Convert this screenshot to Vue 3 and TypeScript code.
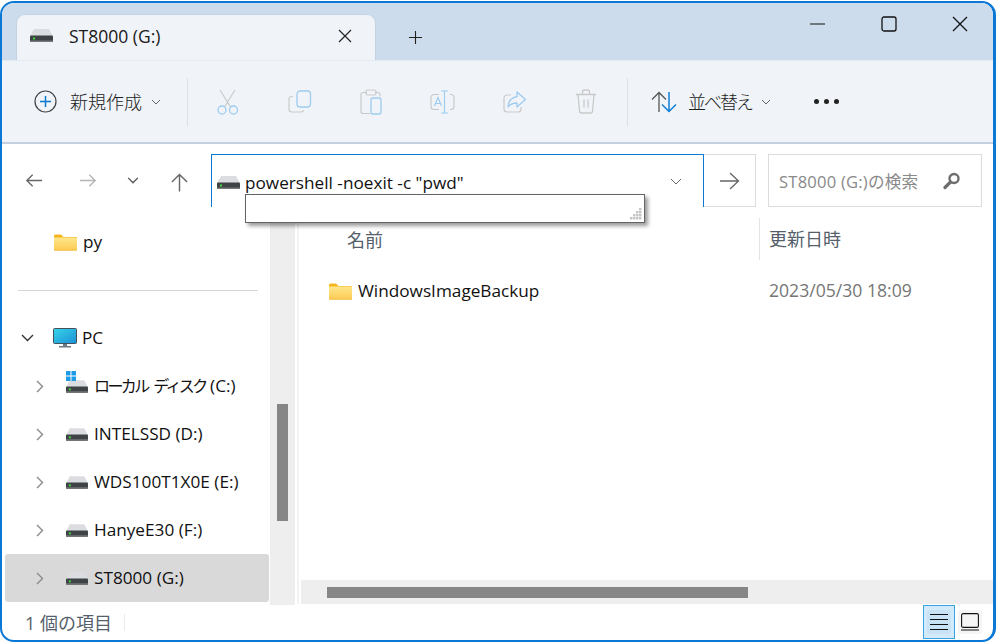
<script setup lang="ts">
interface Drive { label: string; jp?: string; selected?: boolean; win?: boolean }
const drives: Drive[] = [
  { jp: 'ローカル ディスク', label: ' (C:)', win: true },
  { label: 'INTELSSD (D:)' },
  { label: 'WDS100T1X0E (E:)' },
  { label: 'HanyeE30 (F:)' },
  { label: 'ST8000 (G:)', selected: true },
]
const dots: [number, number][] = [[9, 0], [6, 3], [9, 3], [3, 6], [6, 6], [9, 6], [0, 9], [3, 9], [6, 9], [9, 9]]
</script>

<template>
  <div class="window">
    <svg width="0" height="0" class="defs">
      <defs>
        <symbol id="drive" viewBox="0 0 23 13">
          <path d="M4 0h15l4 7H0z" fill="#dcdde0" />
          <rect x="0" y="6.500" width="23" height="6.500" rx="1" fill="#3f4345" />
          <rect x="0" y="11.500" width="23" height="1.500" fill="#77797b" />
          <rect x="3" y="8.500" width="2" height="2" fill="#3fe03a" />
        </symbol>
        <symbol id="folder" viewBox="0 0 23 17">
          <path d="M0 2a1.500 1.500 0 0 1 1.500-1.500h5.500l2.500 2.500H23v2H0z" fill="#f5b51f" />
          <path d="M0 3.500h22a1 1 0 0 1 1 1V15.500a1 1 0 0 1-1 1H1a1 1 0 0 1-1-1z" fill="url(#fg)" />
          <path d="M0 15.700h23v.8H0z" fill="#eeb43a" />
        </symbol>
        <linearGradient id="fg" x1="0" y1="0" x2="0" y2="1">
          <stop offset="0" stop-color="#ffe68c" />
          <stop offset="1" stop-color="#fdcb52" />
        </linearGradient>
      </defs>
    </svg>

    <header class="titlebar">
      <div class="tab">
        <svg class="drive" width="23" height="13"><use href="#drive" /></svg>
        <span class="tab-title">ST8000 (G:)</span>
        <svg class="tab-close" width="14" height="14" viewBox="0 0 14 14"><path d="M1 1l12 12M13 1L1 13" stroke="#222" stroke-width="1.200" fill="none" /></svg>
      </div>
      <svg class="tab-add" width="15" height="15" viewBox="0 0 16 16"><path d="M8 1v14M1 8h14" stroke="#222" stroke-width="1.200" fill="none" /></svg>
      <div class="controls">
        <svg width="16" height="16" viewBox="0 0 16 16"><path d="M0 8h15" stroke="#111" stroke-width="1.200" fill="none" /></svg>
        <svg width="16" height="16" viewBox="0 0 16 16"><rect x="1" y="1" width="14" height="14" rx="2" stroke="#111" stroke-width="1.300" fill="none" /></svg>
        <svg width="16" height="16" viewBox="0 0 16 16"><path d="M1 1l14 14M15 1L1 15" stroke="#111" stroke-width="1.300" fill="none" /></svg>
      </div>
    </header>

    <section class="toolbar">
      <svg class="t-new" width="23" height="23" viewBox="0 0 23 23">
        <circle cx="11.500" cy="11.500" r="10.500" fill="none" stroke="#444" stroke-width="1.200" />
        <path d="M11.500 6v11M6 11.500h11" stroke="#0a78d0" stroke-width="1.500" fill="none" />
      </svg>
      <span class="t-label">新規作成</span>
      <svg class="t-chev" width="10" height="6" viewBox="0 0 10 6"><path d="M1 1l4 4 4-4" stroke="#666" fill="none" /></svg>
      <i class="t-sep sep-a"></i>

      <svg class="t-icon first" width="24" height="26" viewBox="0 0 24 26">
        <path d="M4 1l10.500 17M19 1L8.500 18" stroke="#c9c9c9" stroke-width="1.200" fill="none" />
        <circle cx="6" cy="21" r="4" fill="none" stroke="#9fcbef" stroke-width="1.300" />
        <circle cx="17.500" cy="21" r="4" fill="none" stroke="#9fcbef" stroke-width="1.300" />
      </svg>
      <svg class="t-icon" width="24" height="24" viewBox="0 0 24 24">
        <path d="M5 6.500h-1.500a2.500 2.500 0 0 0-2.500 2.500v10a3 3 0 0 0 3 3h9a3 3 0 0 0 2.700-1.800" fill="none" stroke="#c9c9c9" stroke-width="1.200" />
        <rect x="9" y="1" width="13.500" height="16" rx="3" fill="none" stroke="#9fcbef" stroke-width="1.300" />
      </svg>
      <svg class="t-icon" width="22" height="26" viewBox="0 0 22 26">
        <path d="M7 3.500H3a2 2 0 0 0-2 2v17a2 2 0 0 0 2 2h7M15 3.500h3a2 2 0 0 1 2 2v2" fill="none" stroke="#c9c9c9" stroke-width="1.200" />
        <rect x="6" y="1" width="10" height="5" rx="1.500" fill="none" stroke="#c9c9c9" stroke-width="1.200" />
        <rect x="11" y="9" width="10" height="16" rx="2" fill="none" stroke="#9fcbef" stroke-width="1.300" />
      </svg>
      <svg class="t-icon" width="25" height="24" viewBox="0 0 25 24">
        <path d="M9 4.500H4a3 3 0 0 0-3 3v9a3 3 0 0 0 3 3h5M20 4.500h1a3 3 0 0 1 3 3v9a3 3 0 0 1-3 3h-1" fill="none" stroke="#c9c9c9" stroke-width="1.200" />
        <path d="M11 1h7M11 23h7M14.500 1v22" fill="none" stroke="#9fcbef" stroke-width="1.200" />
        <path d="M4.500 16l3.500-8.500 3.500 8.500M5.700 13.500h5" fill="none" stroke="#9fcbef" stroke-width="1.200" />
      </svg>
      <svg class="t-icon" width="24" height="22" viewBox="0 0 24 22">
        <path d="M8 4H4a3 3 0 0 0-3 3v11a3 3 0 0 0 3 3h11a3 3 0 0 0 3-3v-2" fill="none" stroke="#c9c9c9" stroke-width="1.200" />
        <path d="M14 1l8.500 7.500L14 16v-4c-4 0-7 1-9 4 0-5 3-9.500 9-10.500z" fill="none" stroke="#9fcbef" stroke-width="1.300" stroke-linejoin="round" />
      </svg>
      <svg class="t-icon" width="22" height="25" viewBox="0 0 22 25">
        <path d="M1 5.500h20M7.500 5.500V3a2 2 0 0 1 2-2h3a2 2 0 0 1 2 2v2.500" fill="none" stroke="#c9c9c9" stroke-width="1.300" />
        <path d="M3 5.500l1.500 16.500a2 2 0 0 0 2 2h9a2 2 0 0 0 2-2L19 5.500M9 10.500v8M13 10.500v8" fill="none" stroke="#c9c9c9" stroke-width="1.300" />
      </svg>
      <i class="t-sep sep-b"></i>

      <svg class="t-sort" width="26" height="22" viewBox="0 0 26 22">
        <path d="M8 21V1.500M1 8.500l7-7 7 7" fill="none" stroke="#555" stroke-width="1.300" />
        <path d="M18 1v19.500M11 13.500l7 7 7-7" fill="none" stroke="#0f7fd6" stroke-width="1.500" />
      </svg>
      <span class="t-label sort-label">並べ替え</span>
      <svg class="t-chev" width="10" height="6" viewBox="0 0 10 6"><path d="M1 1l4 4 4-4" stroke="#666" fill="none" /></svg>
      <div class="t-more"><b></b><b></b><b></b></div>
    </section>

    <section class="navbar">
      <svg class="n-ico back" width="18" height="15" viewBox="0 0 20 16"><path d="M19 8H2M8.500 1.500L2 8l6.500 6.500" fill="none" stroke="#666" stroke-width="1.500" /></svg>
      <svg class="n-ico fwd" width="18" height="15" viewBox="0 0 20 16"><path d="M1 8h17M11.500 1.500L18 8l-6.500 6.500" fill="none" stroke="#b5b5b5" stroke-width="1.500" /></svg>
      <svg class="n-ico down" width="12" height="7" viewBox="0 0 13 8"><path d="M1 1l5.500 5.500L12 1" fill="none" stroke="#555" stroke-width="1.600" /></svg>
      <svg class="n-ico up" width="19" height="20" viewBox="0 0 20 20"><path d="M10 20V2M2 10l8-8 8 8" fill="none" stroke="#666" stroke-width="1.500" /></svg>

      <div class="address">
        <svg class="addr-drive" width="23" height="13"><use href="#drive" /></svg>
        <span class="addr-text">powershell -noexit -c "pwd"</span>
        <svg class="addr-chev" width="12" height="7" viewBox="0 0 12 7"><path d="M1 1l5 5 5-5" fill="none" stroke="#666" /></svg>
        <div class="popup">
          <svg class="grip" width="12" height="12" viewBox="0 0 12 12">
            <rect v-for="d in dots" :key="d.join()" :x="d[0]" :y="d[1]" width="2.400" height="2.400" fill="#c4c4c4" />
          </svg>
        </div>
      </div>
      <div class="go">
        <svg width="20" height="18" viewBox="0 0 20 18"><path d="M0 9h18.500M10 1l8.500 8-8.500 8" fill="none" stroke="#666" stroke-width="1.300" /></svg>
      </div>
      <div class="search">
        <span>ST8000 (G:)の検索</span>
        <svg width="18" height="18" viewBox="0 0 18 18">
          <circle cx="11" cy="6.500" r="4.500" fill="none" stroke="#6e6e6e" stroke-width="2.400" />
          <path d="M7.500 10L2 15.500" stroke="#6e6e6e" stroke-width="3.200" stroke-linecap="round" />
        </svg>
      </div>
    </section>

    <section class="body">
      <aside class="sidebar">
        <div class="row folder-row">
          <svg width="23" height="17"><use href="#folder" /></svg>
          <span class="lift">py</span>
        </div>
        <hr class="divider" />
        <div class="row pc-row">
          <svg class="tw" width="13" height="8" viewBox="0 0 13 8"><path d="M1 1l5.500 5.500L12 1" fill="none" stroke="#333" stroke-width="1.400" /></svg>
          <svg width="24" height="20" viewBox="0 0 24 20">
            <defs><linearGradient id="sc" x1="0" y1="0" x2="1" y2="1"><stop offset="0" stop-color="#37d5e8" /><stop offset="1" stop-color="#1c8fd6" /></linearGradient></defs>
            <rect x="0.500" y="0.500" width="23" height="15" rx="1" fill="url(#sc)" stroke="#44505a" />
            <rect x="10" y="16" width="4" height="2" fill="#6c7a84" />
            <rect x="6" y="18" width="12" height="1.500" fill="#6c7a84" />
          </svg>
          <span class="lift">PC</span>
        </div>
        <div v-for="d in drives" :key="d.label" class="row drive-row" :class="{ selected: d.selected }">
          <svg class="tw" width="8" height="13" viewBox="0 0 8 13"><path d="M1 1l5.500 5.500L1 12" fill="none" stroke="#8a8a8a" stroke-width="1.400" /></svg>
          <span class="drive-ico">
            <svg width="22" height="13"><use href="#drive" /></svg>
            <svg v-if="d.win" class="win" width="10" height="10" viewBox="0 0 10 10">
              <path d="M0 0h4.500v4.500H0zM5.500 0H10v4.500H5.500zM0 5.500h4.500V10H0zM5.500 5.500H10V10H5.500z" fill="#1e9be6" />
            </svg>
          </span>
          <span class="d-label lift"><span v-if="d.jp" class="kana">{{ d.jp }}</span>{{ d.label }}</span>
        </div>
      </aside>

      <div class="vscroll"><i></i></div>

      <main class="main">
        <div class="pane">
          <div class="head">
            <svg class="sort-caret" width="9" height="5" viewBox="0 0 9 5"><path d="M1 4.500L4.500 1 8 4.500" fill="none" stroke="#777" /></svg>
            <span class="h-name">名前</span>
            <span class="h-date">更新日時</span>
          </div>
          <div class="item">
            <svg width="23" height="17"><use href="#folder" /></svg>
            <span class="i-name lift">WindowsImageBackup</span>
            <span class="i-date lift">2023/05/30 18:09</span>
          </div>
        </div>
        <div class="hscroll"><i></i></div>
      </main>
    </section>

    <footer class="status">
      <span class="count">1 個の項目</span>
      <i class="st-sep"></i>
      <div class="view on">
        <span>
          <svg width="20" height="18" viewBox="0 0 20 18"><path d="M1 1.500h18M1 6.500h18M1 11.500h18M1 16.500h18" stroke="#111" stroke-width="1.100" fill="none" /></svg>
        </span>
      </div>
      <div class="view alt">
        <svg width="18" height="18" viewBox="0 0 18 18"><rect x="0.600" y="0.600" width="16.800" height="13.800" rx="1.500" fill="none" stroke="#111" stroke-width="1.100" /><path d="M0 17h18" stroke="#111" stroke-width="1.100" /></svg>
      </div>
    </footer>
  </div>
</template>

<style>
html, body { margin: 0; background: #fff; overflow: hidden; }
</style>

<style scoped>
.window {
  box-sizing: border-box;
  width: 996px;
  height: 641px;
  margin-top: 1px;
  border: 2px solid #0a78d4;
  border-right-width: 3px;
  border-radius: 14px;
  overflow: hidden;
  display: flex;
  flex-direction: column;
  background: #fff;
  font-family: "Open Sans", "Noto Sans CJK JP", sans-serif;
  color: #1a1a1a;
  font-size: 17.200px;
}
.defs { position: absolute; }
.lift { padding-bottom: 2px; }

.titlebar {
  height: 57px;
  flex: none;
  background: #cddcec;
  display: flex;
  align-items: flex-end;
  padding-left: 14px;
}
.tab {
  box-sizing: border-box;
  width: 360px;
  height: 46px;
  background: #f0f4f9;
  border: 1px solid #c3d3e4;
  border-bottom: 0;
  border-radius: 9px 9px 0 0;
  display: flex;
  align-items: center;
  padding: 0 23px 4px 13px;
}
.tab-title { margin-left: 16px; flex: 1; font-size: 17.500px; }
.tab-add { margin: 0 0 15px 32px; }
.controls {
  margin-left: auto;
  align-self: flex-start;
  display: flex;
  gap: 55px;
  padding: 13px 25px 0 0;
}

.toolbar {
  box-sizing: border-box;
  height: 84px;
  flex: none;
  background: #f0f4f9;
  border-top: 1px solid #e3eaf2;
  border-bottom: 2px solid #c5d0de;
  display: flex;
  align-items: center;
  padding-left: 32px;
}
.t-label { font-size: 18px; font-weight: 300; margin-left: 13px; color: #222; position: relative; top: -1px; }
.t-chev { margin-left: 9px; }
.t-sep { width: 1px; height: 48px; background: #dde2e8; display: block; }
.sep-a { margin-left: 26px; }
.t-icon { margin-left: 48px; flex: none; }
.t-icon.first { margin-left: 28px; }
.sep-b { margin-left: 30px; }
.t-sort { margin-left: 23px; }
.sort-label { margin-left: 11px; letter-spacing: -2px; }
.t-more { display: flex; gap: 5px; margin-left: 43px; }
.t-more b { width: 5px; height: 5px; border-radius: 50%; background: #222; }

.navbar {
  box-sizing: border-box;
  height: 64px;
  flex: none;
  display: flex;
  align-items: flex-start;
  padding: 10px 11px 0 0;
}
.n-ico { flex: none; }
.back { margin: 19px 0 0 23px; }
.fwd { margin: 19px 0 0 36px; }
.down { margin: 23px 0 0 30px; }
.up { margin: 18px 0 0 31px; }
.address {
  position: relative;
  box-sizing: border-box;
  width: 493px;
  height: 53px;
  margin-left: 22px;
  border: 1px solid #0a78d4;
  border-bottom: 0;
  display: flex;
  align-items: center;
  padding: 0 21px 0 5px;
}
.addr-text { margin-left: 5px; flex: 1; color: #111; position: relative; top: 1px; }
.addr-drive { position: relative; top: 1px; }
.popup {
  position: absolute;
  left: 33px;
  top: 39px;
  box-sizing: border-box;
  width: 400px;
  height: 29px;
  background: #fff;
  border: 1px solid #646464;
  box-shadow: 3px 3px 4px rgba(0, 0, 0, 0.4);
  z-index: 3;
}
.grip { position: absolute; right: 2px; bottom: 2px; }
.go {
  box-sizing: border-box;
  width: 52px;
  height: 53px;
  border: 1px solid #dcdcdc;
  border-left: 0;
  display: flex;
  align-items: center;
  justify-content: center;
}
.search {
  box-sizing: border-box;
  width: 214px;
  height: 53px;
  margin-left: 12px;
  border: 1px solid #dcdcdc;
  display: flex;
  align-items: center;
  justify-content: space-between;
  padding: 0 20px 0 10px;
  color: #8a8a8a;
  font-size: 16.600px;
  letter-spacing: 0.200px;
}

.body { flex: 1; min-height: 0; display: flex; }
.sidebar { width: 268px; flex: none; padding: 10px 1px 0 3px; box-sizing: border-box; overflow: hidden; }
.row {
  box-sizing: border-box;
  height: 48px;
  display: flex;
  align-items: center;
  color: #111;
  border-radius: 3px;
}
.folder-row { padding-left: 49px; gap: 6px; }
.divider { border: 0; height: 1px; background: #d4d4d4; margin: 24px 11px 23px 13px; }
.pc-row { padding-left: 16px; }
.pc-row .tw { margin-right: 19px; }
.pc-row span { margin-left: 5px; }
.drive-row { padding-left: 31px; }
.drive-row .tw { margin-right: 22px; }
.drive-row.selected { background: #d9d9d9; }
.drive-ico { position: relative; display: flex; width: 22px; margin-right: 6px; }
.win { position: absolute; left: 0; top: -9px; }
.d-label { white-space: pre; }
.kana { font-size: 16px; letter-spacing: -2.600px; word-spacing: 4px; }

.vscroll { width: 25px; flex: none; background: #eeeeee; padding: 196px 7px 0; box-sizing: border-box; margin-bottom: -1px; }
.vscroll i { display: block; height: 117px; background: #868686; }

.main { flex: 1; min-width: 0; display: flex; flex-direction: column; margin-left: 2px; padding-left: 2px; border-left: 2px solid #f3f3f3; }
.pane { flex: 1; min-height: 0; padding-left: 2px; }
.head {
  position: relative;
  height: 42px;
  margin-top: 10px;
  display: flex;
  align-items: center;
  color: #555f6b;
  font-size: 18px;
}
.sort-caret { position: absolute; left: 244px; top: -3px; }
.h-name { margin-left: 44px; width: 412px; }
.h-date { border-left: 1px solid #e4e4e4; height: 42px; line-height: 42px; padding-left: 9px; }
.item { display: flex; align-items: center; height: 24px; margin-top: 19px; padding-left: 26px; }
.i-name { margin-left: 6px; width: 411px; color: #111; }
.i-date { color: #767676; font-size: 17.600px; }
.hscroll { height: 24px; flex: none; background: #eeeeee; padding: 7px 0 6px 26px; box-sizing: border-box; }
.hscroll i { display: block; width: 421px; height: 11px; background: #868686; }

.status {
  height: 36px;
  flex: none;
  display: flex;
  align-items: center;
  padding-left: 23px;
  color: #555f6b;
  font-size: 18px;
}
.count { width: 99px; white-space: nowrap; }
.st-sep { width: 1px; height: 17px; background: #eaeaea; }
.view { box-sizing: border-box; display: flex; align-items: center; justify-content: center; }
.view.on {
  margin-left: auto;
  width: 32px;
  height: 34px;
  background: #d2eafa;
  border: 1px solid #3aa3e3;
}
.view.on span {
  width: 24px;
  height: 24px;
  background: #c7e3f5;
  border-radius: 3px;
  display: flex;
  align-items: center;
  justify-content: center;
}
.view.alt {
  width: 24px;
  height: 24px;
  margin: 0 11px 0 3px;
  background: #f5f5f5;
  border-radius: 3px;
}
</style>
